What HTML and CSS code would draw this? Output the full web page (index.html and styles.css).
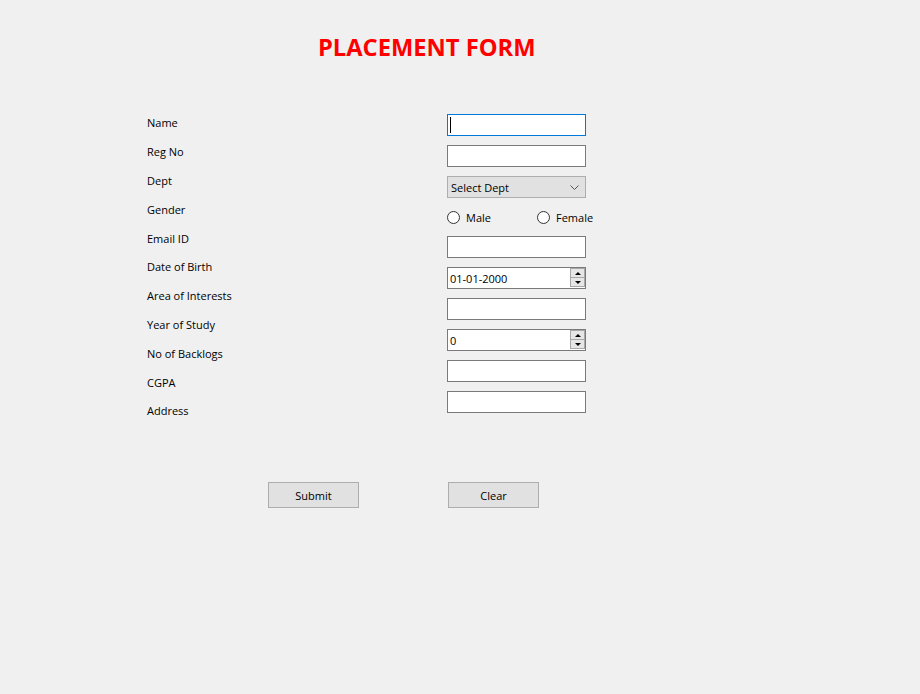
FILE: index.html
```html
<!DOCTYPE html>
<html>
<head>
  <title>Placement Form</title>
  <link rel="stylesheet" href="styles.css">
</head>
<body>
  <div class="Form">
    <h1 class="Title">PLACEMENT FORM</h1>

    <div class="Fields">
      <div class="Labels">
        <label>Name</label>
        <label>Reg No</label>
        <label>Dept</label>
        <label>Gender</label>
        <label>Email ID</label>
        <label>Date of Birth</label>
        <label>Area of Interests</label>
        <label>Year of Study</label>
        <label>No of Backlogs</label>
        <label>CGPA</label>
        <label>Address</label>
      </div>

      <div class="Controls">
        <div class="Box Focused">
          <input type="text">
          <span class="Caret"></span>
        </div>
        <div class="Box"><input type="text"></div>
        <div class="Select">
          <span>Select Dept</span>
          <svg width="9" height="5" viewBox="0 0 9 5">
            <polyline points="0.5,0.5 4.5,4.5 8.5,0.5" fill="none" stroke="#555" stroke-width="1"/>
          </svg>
        </div>
        <div class="Radios">
          <label class="Radio"><input type="radio" name="gender"><span>Male</span></label>
          <label class="Radio"><input type="radio" name="gender"><span>Female</span></label>
        </div>
        <div class="Box"><input type="text"></div>
        <div class="Box">
          <input type="text" value="01-01-2000">
          <div class="Spinner">
            <span class="Up"></span>
            <span class="Down"></span>
          </div>
        </div>
        <div class="Box"><input type="text"></div>
        <div class="Box">
          <input type="text" value="0">
          <div class="Spinner">
            <span class="Up"></span>
            <span class="Down"></span>
          </div>
        </div>
        <div class="Box"><input type="text"></div>
        <div class="Box"><input type="text"></div>
      </div>
    </div>

    <div class="Actions">
      <button>Submit</button>
      <button>Clear</button>
    </div>
  </div>
</body>
</html>
```

FILE: styles.css
```css
*
{
  margin: 0;
  padding: 0;
  box-sizing: border-box;
}

body
{
  background: #f0f0f0;
  font-family: 'Open Sans', 'Noto Sans', sans-serif;
  font-size: 11px;
  color: #000;
  min-height: 100vh;
}

.Form
{
  width: 920px;
  height: 694px;
}

.Title
{
  height: 100px;
  padding: 29px 0 0 318px;
  font-size: 23.7px;
  font-weight: bold;
  color: #ff0000;
  line-height: 36px;
}

.Fields
{
  display: flex;
  height: 330px;
  padding-left: 147px;
}

.Labels
{
  display: flex;
  flex-direction: column;
  width: 300px;
  padding-top: 9.4px;
}

.Labels label
{
  line-height: 28.8px;
}

.Controls
{
  display: flex;
  flex-direction: column;
  gap: 9px;
  padding-top: 14px;
}

.Box
{
  position: relative;
  display: flex;
  width: 139px;
  height: 22px;
  background: #fff;
  border: 1px solid #7a7a7a;
}

.Box.Focused
{
  border-color: #0078d7;
}

.Box input
{
  flex: 1;
  min-width: 0;
  border: none;
  outline: none;
  background: transparent;
  padding-left: 2px;
  font: inherit;
  color: #000;
}

/* text cursor of the focused field */
.Caret
{
  position: absolute;
  left: 2px;
  top: 2px;
  width: 1px;
  height: 16px;
  background: #000;
}

.Spinner
{
  display: flex;
  flex-direction: column;
  width: 15px;
  margin: 0 0 1px 0;
  border: 1px solid #a8a8a8;
  background: #e6e6e6;
}

.Spinner span
{
  flex: 1;
  display: flex;
  align-items: center;
  justify-content: center;
}

.Spinner .Up
{
  border-bottom: 1px solid #a8a8a8;
}

.Spinner .Up::before
{
  content: "";
  border-left: 3px solid transparent;
  border-right: 3px solid transparent;
  border-bottom: 3px solid #000;
}

.Spinner .Down::before
{
  content: "";
  border-left: 3px solid transparent;
  border-right: 3px solid transparent;
  border-top: 3px solid #000;
}

.Select
{
  display: flex;
  align-items: center;
  justify-content: space-between;
  width: 139px;
  height: 22px;
  padding: 0 6px 0 3px;
  background: #e1e1e1;
  border: 1px solid #adadad;
}

.Radios
{
  display: flex;
  align-items: center;
  height: 20px;
}

.Radio
{
  display: flex;
  align-items: center;
  width: 90px;
}

.Radio input
{
  appearance: none;
  width: 13px;
  height: 13px;
  margin: 0 6px 0 0;
  border: 1px solid #333;
  border-radius: 50%;
  background: #fff;
}

.Actions
{
  display: flex;
  gap: 89px;
  padding: 52px 0 0 268px;
}

.Actions button
{
  width: 91px;
  height: 26px;
  background: #e1e1e1;
  border: 1px solid #adadad;
  font: inherit;
  color: #000;
}
```
